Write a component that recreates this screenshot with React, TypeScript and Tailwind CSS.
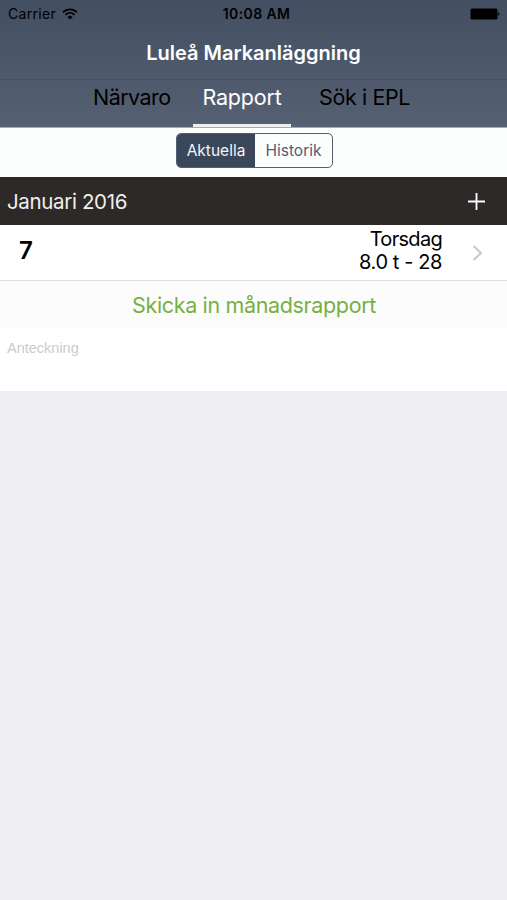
import React from 'react';

const tabs = [
  { label: 'Närvaro', className: 'w-[100px] text-black tracking-[-0.55px]' },
  { label: 'Rapport', className: 'w-[98px] text-white tracking-[-0.2px]', active: true },
  { label: 'Sök i EPL', className: 'w-[146px] pl-[28px] text-black tracking-[-0.4px]' },
];

const StatusBar: React.FC = () => {
  return (
    <div className="flex h-[27px] items-center text-[14px] leading-none text-black">
      <div className="flex flex-1 items-center gap-[6px] pl-2">
        <span className="tracking-[0.3px]">Carrier</span>
        <svg width="16" height="12" viewBox="0 0 16 12" fill="none" stroke="currentColor" strokeWidth="1.7">
          <path d="M1 4.3C5 .3 11 .3 15 4.3" />
          <path d="M3.5 6.9C6.1 4.3 9.9 4.3 12.5 6.9" />
          <path d="M8 11.6 5.4 8.9C6.9 7.5 9.1 7.5 10.6 8.9Z" fill="currentColor" stroke="none" />
        </svg>
      </div>
      <span className="mr-[-5px] pt-px font-semibold tracking-[0.4px]">10:08 AM</span>
      <div className="flex flex-1 justify-end pr-[7px]">
        <svg width="30" height="12" viewBox="0 0 30 12" fill="black">
          <rect x="0.5" y="0.5" width="27" height="11" rx="1.5" />
          <path d="M28.2 4.3C30 4.7 30 7.3 28.2 7.7Z" />
        </svg>
      </div>
    </div>
  );
};

const Header: React.FC = () => {
  return (
    <header className="h-[127px] bg-gradient-to-b from-[#434f61] to-[#566073]">
      <StatusBar />
      <div className="flex h-[53px] items-center justify-center border-b border-[#465265] pb-px">
        <h1 className="text-[20px] leading-none font-semibold text-white">Luleå Markanläggning</h1>
      </div>
      <nav className="flex h-[47px] pl-[93px]">
        {tabs.map((tab) => (
          <a
            key={tab.label}
            href="#"
            className={`flex h-full flex-col justify-between pt-[5px] text-[21.5px] leading-[24px] whitespace-nowrap ${tab.className}`}
          >
            <span className={tab.active ? 'text-center' : ''}>{tab.label}</span>
            {tab.active && <span className="h-[3px] bg-[#eeeeef]" />}
          </a>
        ))}
      </nav>
    </header>
  );
};

const App: React.FC = () => {
  return (
    <div className="h-[900px] w-[507px] overflow-hidden bg-[#eeedf2] font-['Inter','Liberation_Sans',sans-serif]">
      <Header />

      <div className="flex h-[50px] justify-center border-t border-[#a4a9b3] bg-[#fcfdfd] pt-[5px] pl-[2px]">
        <div className="flex h-[35px] w-[157px] overflow-hidden rounded-[5px] border border-[#545e72] text-[15.5px]">
          <button className="w-[78px] bg-[#3a465a] text-[#f3f5f8]">Aktuella</button>
          <button className="flex-1 text-[#545e72]">Historik</button>
        </div>
      </div>

      <div className="flex h-[48px] items-center justify-between bg-[#2d2928] pr-[22px] pl-[7px] text-[#f0efee]">
        <h2 className="pt-[2px] text-[20.5px] leading-none tracking-[-0.35px]">Januari 2016</h2>
        <svg width="17" height="17" viewBox="0 0 17 17" stroke="white" strokeWidth="1.8">
          <path d="M8.5 0V17M0 8.5H17" />
        </svg>
      </div>

      <div className="flex h-[56px] items-center border-b border-[#e1e1e3] bg-white text-black">
        <span className="flex-1 pb-1 pl-[19px] text-[24px] leading-none font-semibold">7</span>
        <div className="pb-[4px] text-right text-[20px] leading-[23px]">
          <p className="tracking-[-0.7px]">Torsdag</p>
          <p className="tracking-[-0.4px]">8.0 t - 28</p>
        </div>
        <svg className="mr-[24px] ml-[30px]" width="11" height="16" viewBox="0 0 11 16" fill="none" stroke="#c7c7cc" strokeWidth="2">
          <path d="M1.5 1 9 8 1.5 15" />
        </svg>
      </div>

      <button className="flex h-[48px] w-full items-center justify-center bg-[#fcfcfc] pt-px pl-px text-[21.5px] leading-none tracking-[-0.35px] text-[#76b043]">
        Skicka in månadsrapport
      </button>

      <div className="h-[62px] bg-white pt-[11px] pl-[7px] font-['Liberation_Sans',sans-serif] text-[14.5px] leading-[17px] text-[#cbcbcc]">
        Anteckning
      </div>
    </div>
  );
};

export default App;
